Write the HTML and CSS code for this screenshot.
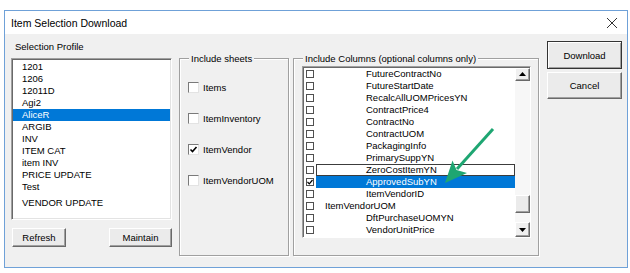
FILE: index.html
```html
<!DOCTYPE html>
<html lang="en">
<head>
    <meta charset="UTF-8">
    <title>Item Selection Download</title>
    <link rel="stylesheet" href="styles.css">
</head>
<body>
    <div class="window">
        <div class="titlebar">
            <span class="title">Item Selection Download</span>
            <svg class="close" width="12" height="12" viewBox="0 0 12 12">
                <path d="M1 1 L11 11 M11 1 L1 11" stroke="#333" stroke-width="1" fill="none"/>
            </svg>
        </div>
        <div class="client">
            <div class="profile">
                <div class="caption">Selection Profile</div>
                <ul class="listbox">
                    <li>1201</li>
                    <li>1206</li>
                    <li>12011D</li>
                    <li>Agi2</li>
                    <li class="selected">AliceR</li>
                    <li>ARGIB</li>
                    <li>INV</li>
                    <li>ITEM CAT</li>
                    <li>item INV</li>
                    <li>PRICE UPDATE</li>
                    <li>Test</li>
                    <li class="last">VENDOR UPDATE</li>
                </ul>
                <div class="btnrow">
                    <button class="btn refresh">Refresh</button>
                    <button class="btn maintain">Maintain</button>
                </div>
            </div>

            <div class="frame sheets">
                <span class="legend">Include sheets</span>
                <div class="check"><span class="box"></span>Items</div>
                <div class="check"><span class="box"></span>ItemInventory</div>
                <div class="check"><span class="box checked">
                    <svg width="9" height="9" viewBox="0 0 9 9"><path d="M1.5 4.5 L3.5 6.5 L7.5 2" stroke="#000" stroke-width="1.6" fill="none"/></svg>
                </span>ItemVendor</div>
                <div class="check"><span class="box"></span>ItemVendorUOM</div>
            </div>

            <div class="frame columns">
                <span class="legend">Include Columns (optional columns only)</span>
                <div class="collist">
                    <ul class="rows">
                        <li><span class="mini"></span><span class="name">FutureContractNo</span></li>
                        <li><span class="mini"></span><span class="name">FutureStartDate</span></li>
                        <li><span class="mini"></span><span class="name">RecalcAllUOMPricesYN</span></li>
                        <li><span class="mini"></span><span class="name">ContractPrice4</span></li>
                        <li><span class="mini"></span><span class="name">ContractNo</span></li>
                        <li><span class="mini"></span><span class="name">ContractUOM</span></li>
                        <li><span class="mini"></span><span class="name">PackagingInfo</span></li>
                        <li><span class="mini"></span><span class="name">PrimarySuppYN</span></li>
                        <li><span class="mini"></span><span class="name focus">ZeroCostItemYN</span></li>
                        <li><span class="mini">
                            <svg width="6" height="6" viewBox="0 0 6 6"><path d="M0.5 3 L2.3 4.8 L5.5 1" stroke="#000" stroke-width="1.2" fill="none"/></svg>
                        </span><span class="name selected">ApprovedSubYN</span></li>
                        <li><span class="mini"></span><span class="name">ItemVendorID</span></li>
                        <li><span class="mini"></span><span class="name sheet">ItemVendorUOM</span></li>
                        <li><span class="mini"></span><span class="name">DftPurchaseUOMYN</span></li>
                        <li><span class="mini"></span><span class="name">VendorUnitPrice</span></li>
                    </ul>
                    <div class="vscroll">
                        <div class="sbtn up">
                            <svg width="7" height="4" viewBox="0 0 7 4"><path d="M0 4 L3.5 0 L7 4 Z" fill="#000"/></svg>
                        </div>
                        <div class="thumb"></div>
                        <div class="sbtn down">
                            <svg width="7" height="4" viewBox="0 0 7 4"><path d="M0 0 L3.5 4 L7 0 Z" fill="#000"/></svg>
                        </div>
                    </div>
                </div>
            </div>

            <div class="actions">
                <button class="btn default">Download</button>
                <button class="btn cancel">Cancel</button>
            </div>
        </div>
    </div>

    <svg class="pointer" width="630" height="273" viewBox="0 0 630 273">
        <line x1="493" y1="129" x2="457" y2="169" stroke="#1ea672" stroke-width="3"/>
        <path d="M445 183 L452.5 160.5 L456.5 170 L467 173 Z" fill="#1ea672"/>
    </svg>
</body>
</html>
```

FILE: styles.css
```css
body {
    margin: 0;
    background: #fff;
    font-family: "Liberation Sans", Arial, sans-serif;
    font-size: 9.5px;
    color: #000;
}
ul {
    list-style: none;
    margin: 0;
    padding: 0;
}
.window {
    margin: 10px 0 0 4px;
    width: 622px;
    height: 256px;
    border: 1px solid #6fa1d8;
    background: #f0f0f0;
}
.titlebar {
    height: 23px;
    background: #fff;
    display: flex;
    align-items: center;
    justify-content: space-between;
    padding: 0 9px 0 6px;
}
.title {
    font-size: 10.5px;
    color: #000;
}
.close {
    display: block;
}
.client {
    display: flex;
    padding-left: 6px;
}

/* left column */
.profile {
    width: 161px;
}
.caption {
    margin-top: 6px;
    padding-left: 4px;
    line-height: 14px;
}
.listbox {
    margin-top: 4px;
    height: 162px;
    box-sizing: border-box;
    background: #fff;
    border: 1px solid;
    border-color: #a0a0a0 #fff #fff #a0a0a0;
    box-shadow: inset 1px 1px 0 #696969, inset -1px -1px 0 #e3e3e3;
    padding: 2px 1px 0 1px;
}
.listbox li {
    height: 12px;
    line-height: 12px;
    padding-left: 9px;
}
.listbox li.selected {
    background: #0078d7;
    color: #fff;
}
.listbox li.last {
    margin-top: 4px;
}
.btnrow {
    display: flex;
    justify-content: space-between;
    margin-top: 8px;
}
.btn {
    font-family: "Liberation Sans", Arial, sans-serif;
    font-size: 9.5px;
    color: #000;
    background: #ebebeb;
    border: 1px solid;
    border-color: #fff #696969 #696969 #fff;
    box-shadow: inset -1px -1px 0 #a0a0a0;
    padding: 0;
    height: 19px;
}
.refresh {
    width: 54px;
    margin-left: 1px;
}
.maintain {
    width: 63px;
}

/* frames */
.frame {
    position: relative;
    margin-top: 24px;
    height: 198px;
    box-sizing: border-box;
    border: 1px solid #a0a0a0;
    box-shadow: inset 1px 1px 0 #fff, 1px 1px 0 #fff;
}
.legend {
    position: absolute;
    top: -7px;
    left: 9px;
    padding: 0 2px;
    background: #f0f0f0;
    line-height: 13px;
}
.sheets {
    width: 110px;
    margin-left: 7px;
    padding: 21px 0 0 8px;
}
.check {
    display: flex;
    align-items: center;
    height: 14px;
    margin-bottom: 17px;
}
.box {
    width: 11px;
    height: 11px;
    box-sizing: border-box;
    background: #fff;
    border: 1px solid;
    border-color: #7a7a7a #e3e3e3 #e3e3e3 #7a7a7a;
    margin-right: 4px;
    display: flex;
    align-items: center;
    justify-content: center;
}
.box svg {
    display: block;
}
.columns {
    width: 246px;
    margin-left: 4px;
    padding: 7px 0 0 8px;
}
.collist {
    display: flex;
    width: 229px;
    height: 172px;
    box-sizing: border-box;
    background: #fff;
    border: 1px solid;
    border-color: #a0a0a0 #fff #fff #a0a0a0;
    box-shadow: inset 1px 1px 0 #696969;
    padding: 1px 0 0 1px;
}
.rows {
    flex: 1;
}
.rows li {
    display: flex;
    align-items: center;
    height: 12px;
}
.mini {
    width: 8px;
    height: 8px;
    box-sizing: border-box;
    border: 1px solid #505050;
    margin: 0 2px 0 2px;
    display: flex;
    align-items: center;
    justify-content: center;
}
.mini svg {
    display: block;
}
.name {
    flex: 1;
    height: 12px;
    line-height: 12px;
    padding-left: 50px;
}
.name.sheet {
    padding-left: 9px;
}
.name.focus {
    box-shadow: inset 0 0 0 1px #3c3c3c;
}
.name.selected {
    background: #0078d7;
    color: #fff;
}
.vscroll {
    width: 15px;
    display: flex;
    flex-direction: column;
    background: #f7f7f7;
}
.sbtn {
    height: 13px;
    box-sizing: border-box;
    background: #f0f0f0;
    border: 1px solid;
    border-color: #fff #696969 #696969 #fff;
    box-shadow: inset -1px -1px 0 #a0a0a0;
    display: flex;
    align-items: center;
    justify-content: center;
}
.sbtn.down {
    height: 15px;
}
.thumb {
    margin-top: 114px;
    height: 19px;
    box-sizing: border-box;
    background: #ebebeb;
    border: 1px solid;
    border-color: #fff #696969 #696969 #fff;
    box-shadow: inset -1px -1px 0 #a0a0a0;
    margin-bottom: 9px;
}

/* command buttons */
.actions {
    display: flex;
    flex-direction: column;
    width: 75px;
    margin-left: 8px;
    margin-top: 7px;
}
.actions .btn {
    width: 75px;
}
.default {
    height: 28px;
    border: 1px solid #333;
    box-shadow: inset 1px 1px 0 #fff, inset -1px -1px 0 #a0a0a0;
}
.cancel {
    height: 27px;
    margin-top: 3px;
}

.pointer {
    position: absolute;
    left: 0;
    top: 0;
    pointer-events: none;
}
```
